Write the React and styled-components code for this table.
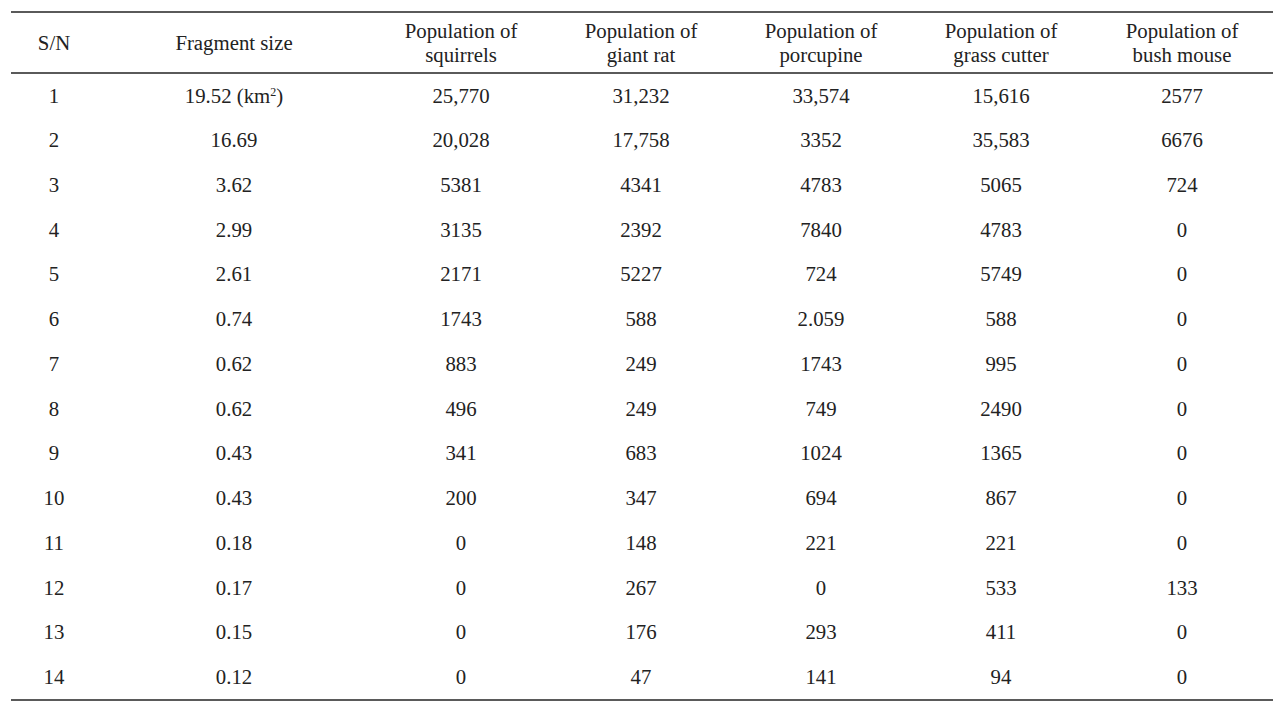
import React from "react";
import styled, { createGlobalStyle } from "styled-components";

const GlobalStyle = createGlobalStyle`
  html, body {
    margin: 0;
    padding: 0;
    background: #ffffff;
  }
  body {
    font-family: "Liberation Serif", "Times New Roman", serif;
    color: #222;
  }
`;

const Page = styled.div`
  padding: 11px 10px 0 11px;
`;

const Table = styled.table`
  width: 1262px;
  border-collapse: collapse;
  table-layout: fixed;
  font-size: 20.8px;
  border-top: 2px solid #5a5a5a;
  border-bottom: 2px solid #5a5a5a;
`;

const HeadRow = styled.tr`
  height: 61px;
  border-bottom: 2px solid #5a5a5a;
`;

const Th = styled.th`
  font-weight: normal;
  text-align: center;
  line-height: 24px;
  padding: 0;
  vertical-align: middle;
`;

const Row = styled.tr`
  height: 44.75px;
`;

const Td = styled.td`
  text-align: center;
  padding: 0;
  vertical-align: middle;
`;

const Sup = styled.sup`
  font-size: 12px;
  line-height: 0;
  vertical-align: 7px;
`;

const columns = [
  { w: 86, label: ["S/N"] },
  { w: 274, label: ["Fragment size"] },
  { w: 180, label: ["Population of", "squirrels"] },
  { w: 180, label: ["Population of", "giant rat"] },
  { w: 180, label: ["Population of", "porcupine"] },
  { w: 180, label: ["Population of", "grass cutter"] },
  { w: 182, label: ["Population of", "bush mouse"] },
];

const rows = [
  ["1", "19.52", "25,770", "31,232", "33,574", "15,616", "2577"],
  ["2", "16.69", "20,028", "17,758", "3352", "35,583", "6676"],
  ["3", "3.62", "5381", "4341", "4783", "5065", "724"],
  ["4", "2.99", "3135", "2392", "7840", "4783", "0"],
  ["5", "2.61", "2171", "5227", "724", "5749", "0"],
  ["6", "0.74", "1743", "588", "2.059", "588", "0"],
  ["7", "0.62", "883", "249", "1743", "995", "0"],
  ["8", "0.62", "496", "249", "749", "2490", "0"],
  ["9", "0.43", "341", "683", "1024", "1365", "0"],
  ["10", "0.43", "200", "347", "694", "867", "0"],
  ["11", "0.18", "0", "148", "221", "221", "0"],
  ["12", "0.17", "0", "267", "0", "533", "133"],
  ["13", "0.15", "0", "176", "293", "411", "0"],
  ["14", "0.12", "0", "47", "141", "94", "0"],
];

export default function App() {
  return (
    <Page>
      <GlobalStyle />
      <Table>
        <colgroup>
          {columns.map((c, i) => (
            <col key={i} style={{ width: c.w }} />
          ))}
        </colgroup>
        <thead>
          <HeadRow>
            {columns.map((c, i) => (
              <Th key={i}>
                {c.label.map((l, j) => (
                  <div key={j}>{l}</div>
                ))}
              </Th>
            ))}
          </HeadRow>
        </thead>
        <tbody>
          {rows.map((r, i) => (
            <Row key={i}>
              {r.map((v, j) => (
                <Td key={j}>
                  {i === 0 && j === 1 ? (
                    <>
                      {v} (km<Sup>2</Sup>)
                    </>
                  ) : (
                    v
                  )}
                </Td>
              ))}
            </Row>
          ))}
        </tbody>
      </Table>
    </Page>
  );
}
